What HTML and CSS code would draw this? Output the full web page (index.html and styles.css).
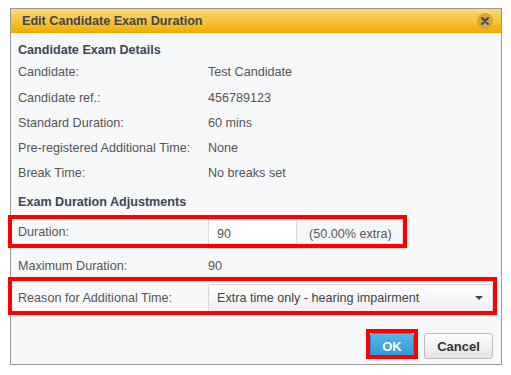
FILE: index.html
```html
<!DOCTYPE html>
<html lang="en">
<head>
    <meta charset="UTF-8">
    <title>Edit Candidate Exam Duration</title>
    <link rel="stylesheet" href="styles.css">
</head>
<body>
    <div class="dialog">
        <div class="dialog-header">
            <span class="dialog-title">Edit Candidate Exam Duration</span>
            <span class="close-btn">
                <svg width="8" height="8" viewBox="0 0 8 8"><path d="M1 1L7 7M7 1L1 7" stroke="#3e4a57" stroke-width="2" stroke-linecap="round"/></svg>
            </span>
        </div>
        <div class="dialog-body">
            <h4 class="section-title">Candidate Exam Details</h4>
            <div class="row"><span class="label">Candidate:</span><span class="value">Test Candidate</span></div>
            <div class="row"><span class="label">Candidate ref.:</span><span class="value">456789123</span></div>
            <div class="row"><span class="label">Standard Duration:</span><span class="value">60 mins</span></div>
            <div class="row"><span class="label">Pre-registered Additional Time:</span><span class="value">None</span></div>
            <div class="row"><span class="label">Break Time:</span><span class="value">No breaks set</span></div>

            <h4 class="section-title second">Exam Duration Adjustments</h4>
            <div class="row field-row duration-row highlight">
                <span class="label">Duration:</span>
                <div class="input-group">
                    <input type="text" class="text-input" value="90">
                    <span class="addon">(50.00% extra)</span>
                </div>
            </div>
            <div class="row max-row"><span class="label">Maximum Duration:</span><span class="value">90</span></div>
            <div class="row field-row reason-row highlight">
                <span class="label">Reason for Additional Time:</span>
                <div class="select-box">
                    <span>Extra time only - hearing impairment</span>
                    <span class="caret"></span>
                </div>
            </div>
        </div>
        <div class="dialog-footer">
            <button class="btn btn-primary highlight">OK</button>
            <button class="btn btn-default">Cancel</button>
        </div>
    </div>
</body>
</html>
```

FILE: styles.css
```css
body {
    margin: 0;
    padding: 8px 0 0 10px;
    background: #fff;
    font-family: 'Liberation Sans', Arial, sans-serif;
    font-size: 12.6px;
    color: #555;
}

.dialog {
    width: 490px;
    height: 355px;
    border: 1px solid #9a9a9a;
    background: #f7f8fa;
    display: flex;
    flex-direction: column;
}

.dialog-header {
    height: 24px;
    background: linear-gradient(to bottom, #fdd978, #f2ac00);
    display: flex;
    align-items: center;
    justify-content: space-between;
    padding: 0 8px 0 11px;
}

.dialog-title {
    font-weight: bold;
    font-size: 12.6px;
    color: #3b4754;
}

.close-btn {
    width: 16px;
    height: 16px;
    border-radius: 50%;
    background: #d8a73a;
    display: flex;
    align-items: center;
    justify-content: center;
}

.dialog-body {
    padding: 9px 7px 0 7px;
    flex: 1;
}

.section-title {
    margin: 0;
    font-size: 12.6px;
    line-height: 17px;
    font-weight: bold;
    color: #3b4754;
}

.section-title.second {
    margin-top: 9px;
    margin-bottom: 8px;
}

.row {
    display: flex;
    align-items: center;
    height: 25px;
    position: relative;
}

.row:nth-of-type(2) {
    margin-top: 1px;
}

.label {
    width: 190px;
    flex-shrink: 0;
}

.duration-row {
    height: 26px;
    width: 385px;
    margin-bottom: 8px;
}

.max-row {
    margin-bottom: 6px;
}

.input-group {
    display: flex;
    align-self: flex-start;
    height: 30px;
}

.text-input {
    width: 89px;
    height: 30px;
    box-sizing: border-box;
    border: 1px solid #dcdcdc;
    background: #fff;
    padding: 0 8px;
    font-family: inherit;
    font-size: 12.6px;
    color: #555;
    margin: 0;
}

.addon {
    width: 106px;
    box-sizing: border-box;
    border: 1px solid #dcdcdc;
    border-left: none;
    background: #f5f6f8;
    display: flex;
    align-items: center;
    padding-left: 12px;
    height: 30px;
}

.reason-row {
    height: 28px;
    width: 475px;
}

.select-box {
    width: 285px;
    height: 28px;
    box-sizing: border-box;
    border: 1px solid #d4d6d8;
    border-radius: 2px;
    background: linear-gradient(to bottom, #ffffff, #eceff2);
    display: flex;
    align-items: center;
    justify-content: space-between;
    padding: 0 9px 0 8px;
    color: #444;
}

.caret {
    width: 0;
    height: 0;
    border-left: 4px solid transparent;
    border-right: 4px solid transparent;
    border-top: 4px solid #444;
}

.highlight::after {
    content: '';
    position: absolute;
    border: 4px solid #f00;
    pointer-events: none;
}

.duration-row::after {
    left: -10px;
    right: -4px;
    top: -4px;
    bottom: -3px;
}

.reason-row::after {
    left: -10px;
    right: -4px;
    top: -7px;
    bottom: -3px;
}

.dialog-footer {
    display: flex;
    justify-content: flex-end;
    gap: 10px;
    padding: 0 8px 5px 0;
}

.btn {
    height: 26px;
    font-family: inherit;
    font-size: 13px;
    font-weight: bold;
    border-radius: 3px;
    margin: 0;
    position: relative;
}

.btn-primary {
    width: 44px;
    color: #fff;
    border: 1px solid #2e8fcc;
    background: linear-gradient(to bottom, #55b6ea, #2f94d3);
}

.btn-primary::after {
    left: -5px;
    right: -5px;
    top: -5px;
    bottom: -1px;
}

.btn-default {
    width: 69px;
    color: #333;
    border: 1px solid #bdbdbd;
    background: linear-gradient(to bottom, #ffffff, #e4e4e4);
}
```
